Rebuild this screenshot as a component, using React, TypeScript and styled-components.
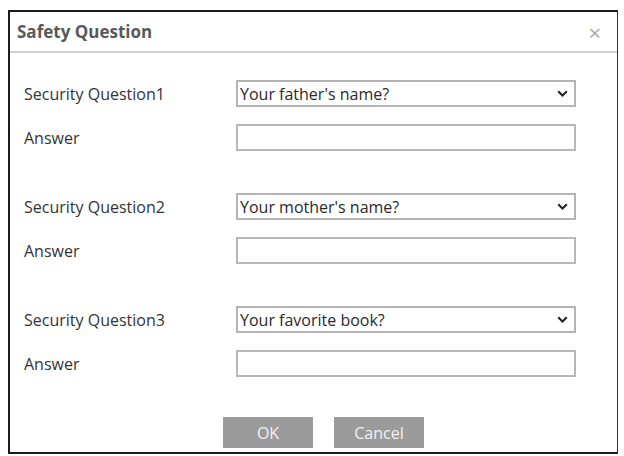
import React, { FC } from 'react'
import styled, { createGlobalStyle } from 'styled-components'

const GlobalStyle = createGlobalStyle`
  body {
    margin: 0;
    background: #ffffff;
    font-family: "Open Sans", "Noto Sans", sans-serif;
  }
`

const questions = [
  { label: 'Security Question1', value: "Your father's name?" },
  { label: 'Security Question2', value: "Your mother's name?" },
  { label: 'Security Question3', value: 'Your favorite book?' }
]

const App: FC = () => (
  <>
    <GlobalStyle />
    <Dialog>
      <Header>
        <Title>Safety Question</Title>
        <Close>×</Close>
      </Header>
      <Body>
        {questions.map((q) => (
          <Group key={q.label}>
            <Row>
              <Label>{q.label}</Label>
              <Select>
                <span>{q.value}</span>
                <svg width="11" height="7" viewBox="0 0 11 7">
                  <path d="M1.2 1.2 L5.5 5.5 L9.8 1.2" fill="none" stroke="#222" strokeWidth="2" />
                </svg>
              </Select>
            </Row>
            <Row>
              <Label>Answer</Label>
              <Input />
            </Row>
          </Group>
        ))}
      </Body>
      <Buttons>
        <Button>OK</Button>
        <Button>Cancel</Button>
      </Buttons>
    </Dialog>
  </>
)

export default App

const Dialog = styled.div`
  box-sizing: border-box;
  margin: 10px 0 0 8px;
  width: 610px;
  height: 444px;
  border: 2px solid #1c1c1c;
  border-right: 1px solid #333;
  display: flex;
  flex-direction: column;
  background: #fff;
`

const Header = styled.div`
  height: 39px;
  border-bottom: 2px solid #cfcfcf;
  display: flex;
  align-items: center;
  justify-content: space-between;
  padding: 0 16px 0 7px;
`

const Title = styled.div`
  font-size: 17px;
  font-weight: 700;
  color: #595959;
`

const Close = styled.div`
  font-size: 22px;
  color: #a8a8a8;
  line-height: 1;
`

const Body = styled.div`
  display: flex;
  flex-direction: column;
  gap: 42px;
  padding: 27px 0 0 14px;
`

const Group = styled.div`
  display: flex;
  flex-direction: column;
  gap: 17px;
`

const Row = styled.div`
  display: grid;
  grid-template-columns: 212px 340px;
  align-items: center;
`

const Label = styled.div`
  font-size: 16px;
  color: #333;
`

const Select = styled.div`
  box-sizing: border-box;
  height: 27px;
  border: 2px solid #b4b4b4;
  display: flex;
  align-items: center;
  justify-content: space-between;
  padding: 0 6px 0 2px;
  font-size: 16px;
  color: #2a2a2a;
`

const Input = styled.div`
  box-sizing: border-box;
  height: 27px;
  border: 2px solid #b8b8b8;
`

const Buttons = styled.div`
  display: flex;
  gap: 21px;
  padding: 40px 0 0 213px;
`

const Button = styled.div`
  width: 90px;
  height: 31px;
  background: #9b9b9b;
  color: #f2f2f2;
  font-size: 16px;
  display: flex;
  align-items: center;
  justify-content: center;
`
